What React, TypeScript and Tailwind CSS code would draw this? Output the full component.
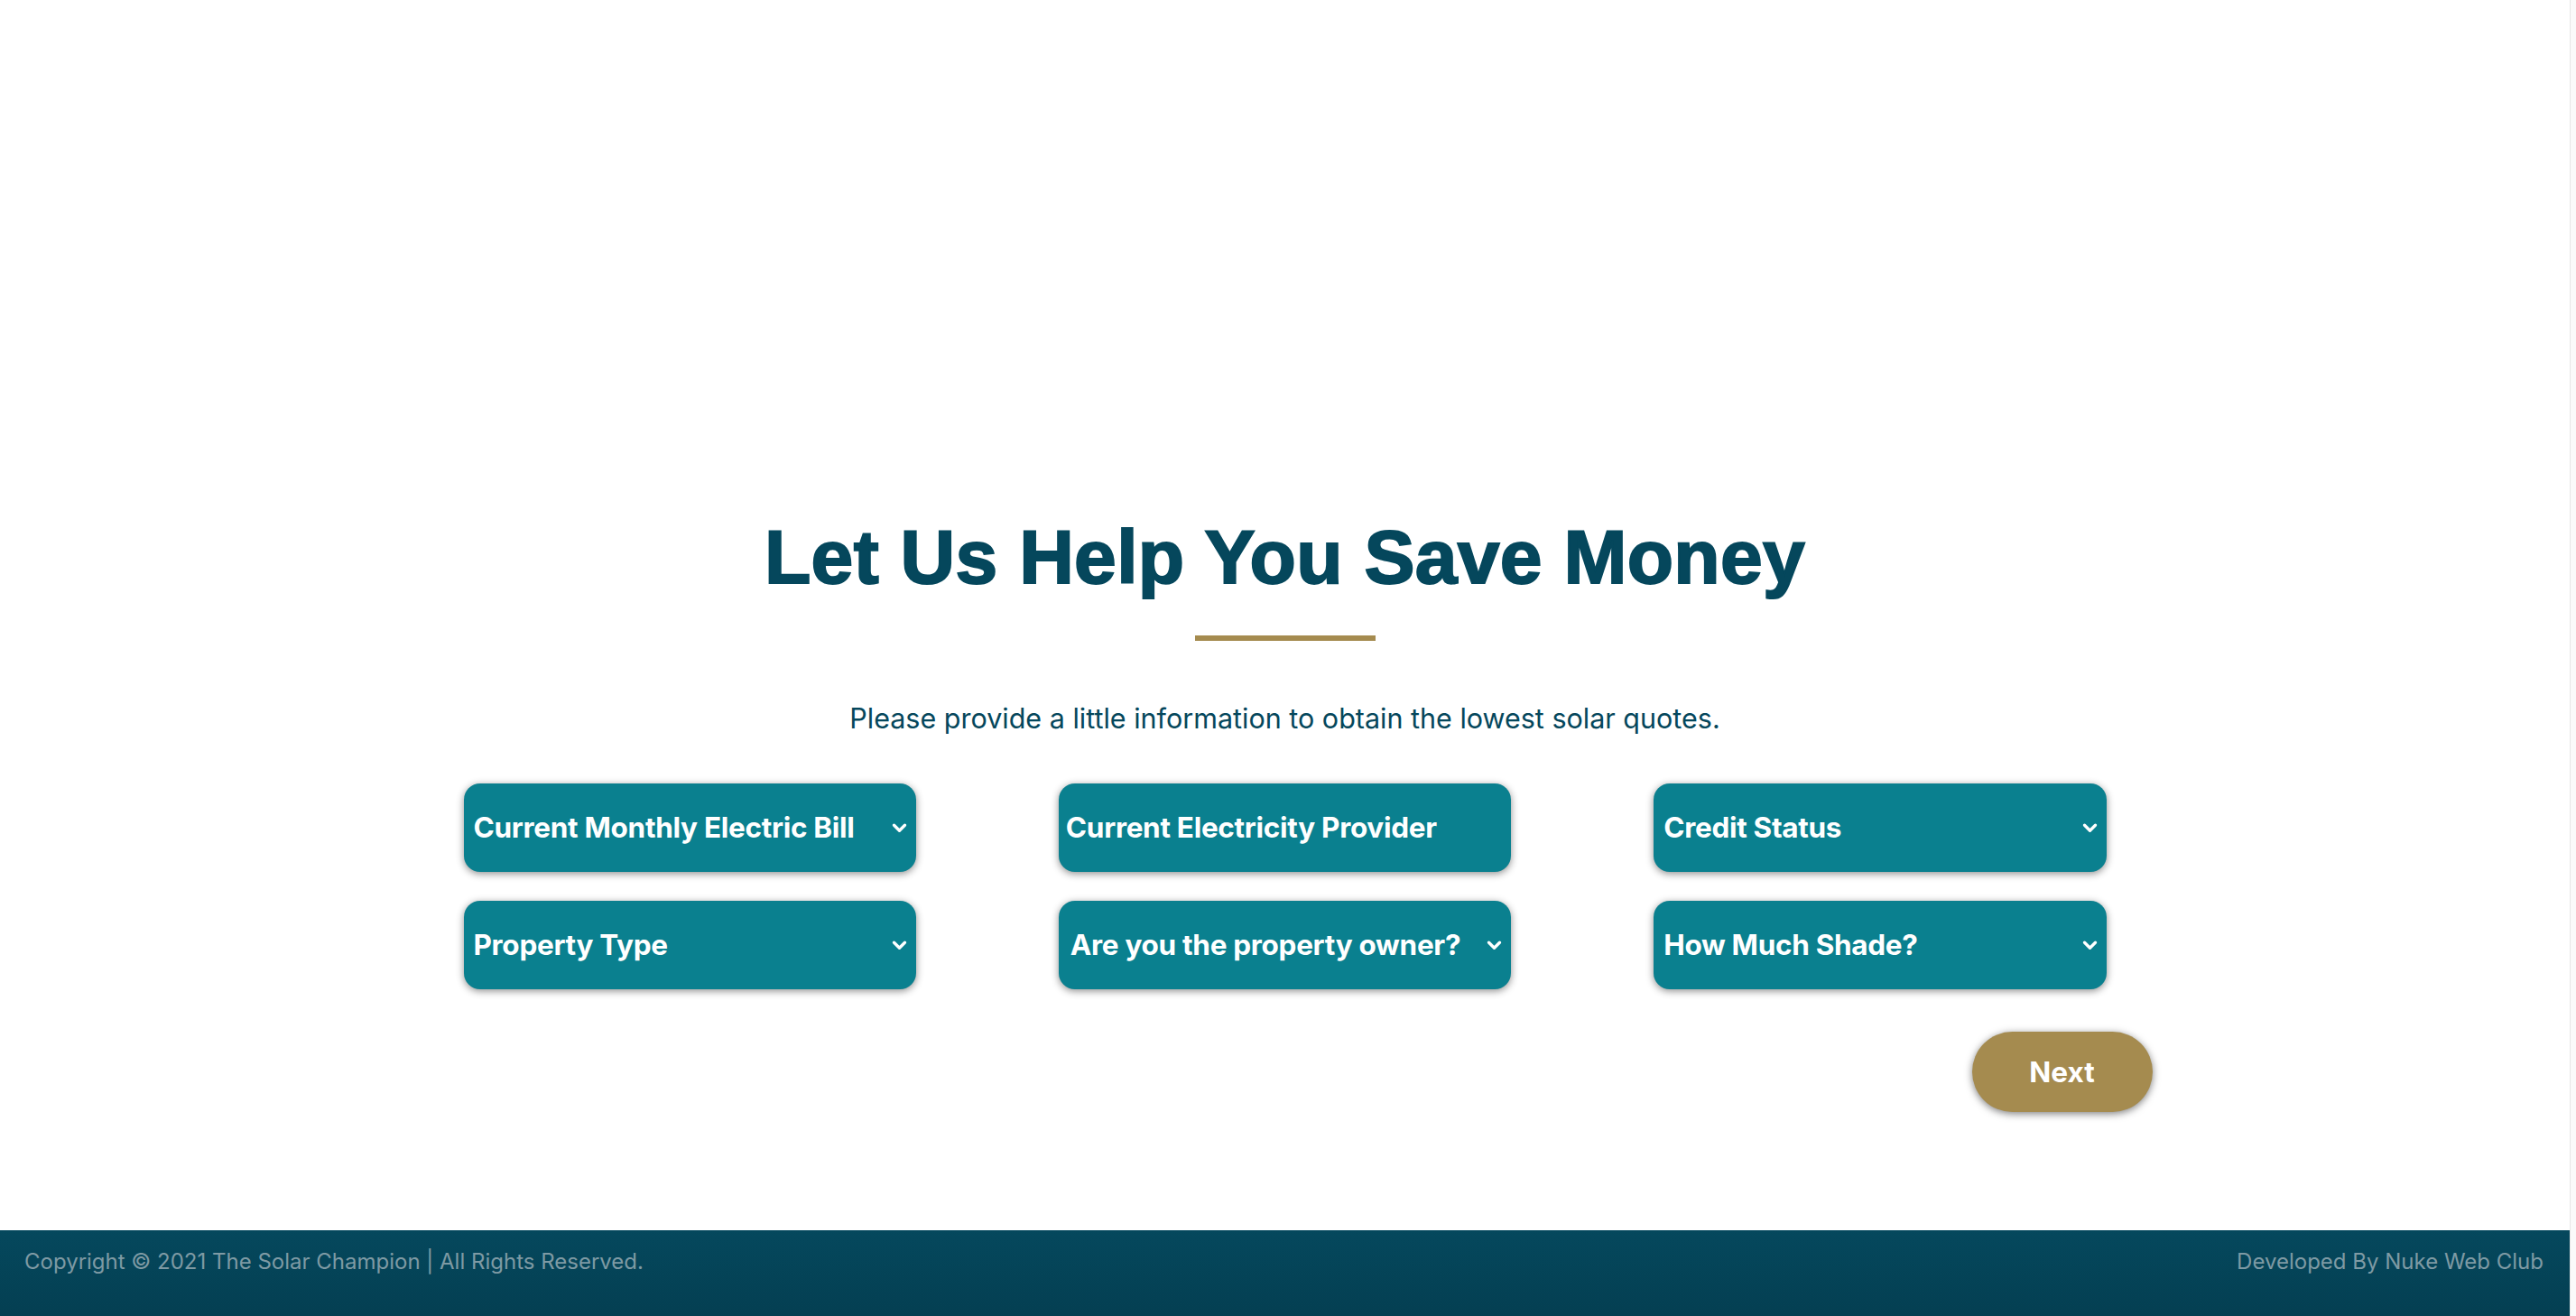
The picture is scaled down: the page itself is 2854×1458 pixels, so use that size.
import { ReactNode } from 'react'

function Chevron() {
  return (
    <svg viewBox="0 0 18 12" className="w-[17px] h-[11px] flex-shrink-0" fill="none">
      <path d="M2.5 2.5 L9 9 L15.5 2.5" stroke="white" strokeWidth="3.6" strokeLinecap="round" strokeLinejoin="round" />
    </svg>
  )
}

interface FieldProps {
  children: ReactNode
  arrow?: boolean
  pad?: string
}

function Field({ children, arrow = true, pad = 'pl-[11px]' }: FieldProps) {
  return (
    <div
      className={`flex items-center justify-between h-[98px] rounded-[18px] bg-[#0a808f] ${pad} pr-[10px] shadow-[0_2px_9px_rgba(0,0,0,0.45)]`}
    >
      <span className="text-white text-[31.5px] font-bold tracking-[-0.3px]">{children}</span>
      {arrow && <Chevron />}
    </div>
  )
}

export default function App() {
  return (
    <div className="flex w-full min-h-[1458px] bg-white font-['Inter',sans-serif]">
      <div className="flex-1 flex flex-col">
        <main className="h-[1363px] pt-[575px]">
          <h1 className="text-center text-[84px] leading-none font-bold tracking-[0.3px] text-[#05475c] [-webkit-text-stroke:2px_#05475c] font-['Liberation_Sans',Arial,sans-serif]">
            Let Us Help You Save Money
          </h1>
          <div className="mx-auto mt-[45px] w-[200px] h-[6px] bg-[#a58b4f]" />
          <p className="mt-[68px] text-center text-[30.5px] leading-[35px] text-[#05475c]">
            Please provide a little information to obtain the lowest solar quotes.
          </p>

          <div className="mx-auto mt-[55px] w-[1922px]">
            <div className="grid grid-cols-3 gap-x-[158px] gap-y-[32px] px-[51px]">
              <Field>Current Monthly Electric Bill</Field>
              <Field arrow={false} pad="pl-[8px]">Current Electricity Provider</Field>
              <Field>Credit Status</Field>
              <Field>Property Type</Field>
              <Field pad="pl-[13px]">Are you the property owner?</Field>
              <Field>How Much Shade?</Field>
            </div>
            <div className="flex justify-end mt-[47px]">
              <button className="w-[200px] h-[89px] rounded-full bg-[#a58b4f] text-white text-[31.5px] font-bold shadow-[0_2px_9px_rgba(0,0,0,0.5)]">
                Next
              </button>
            </div>
          </div>
        </main>

        <footer className="h-[95px] flex justify-between items-start pt-[17px] pl-[27px] pr-[29px] bg-gradient-to-b from-[#05485d] to-[#043f52] text-[24px] leading-[36px] text-[#7e9aa4]">
          <span>Copyright © 2021 The Solar Champion | All Rights Reserved.</span>
          <span>Developed By Nuke Web Club</span>
        </footer>
      </div>
      <div className="w-[7px] bg-[#fafafa] border-l border-[#e6e6e6]" />
    </div>
  )
}
